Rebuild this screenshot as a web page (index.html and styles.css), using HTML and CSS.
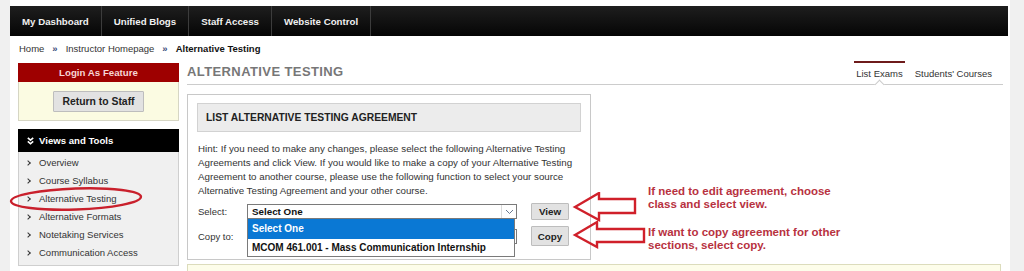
FILE: index.html
```html
<!DOCTYPE html>
<html lang="en">
<head>
    <meta charset="UTF-8">
    <title>Alternative Testing</title>
    <link rel="stylesheet" href="styles.css">
</head>
<body>
    <div class="page">
        <nav class="topnav">
            <a class="nav-item" href="#">My Dashboard</a>
            <a class="nav-item" href="#">Unified Blogs</a>
            <a class="nav-item" href="#">Staff Access</a>
            <a class="nav-item" href="#">Website Control</a>
        </nav>

        <div class="crumbs">
            <a href="#">Home</a>
            <span class="sep">&raquo;</span>
            <a href="#">Instructor Homepage</a>
            <span class="sep">&raquo;</span>
            <span class="current">Alternative Testing</span>
        </div>

        <div class="layout">
            <aside class="sidebar">
                <div class="login-box">
                    <div class="login-head">Login As Feature</div>
                    <div class="login-body">
                        <button class="btn btn-staff">Return to Staff</button>
                    </div>
                </div>

                <div class="tools">
                    <div class="tools-head">
                        <svg class="tools-icon" width="7" height="8" viewBox="0 0 7 8">
                            <path d="M0.8 0.8 L3.5 3.2 L6.2 0.8 M0.8 4.4 L3.5 6.8 L6.2 4.4" fill="none" stroke="#fff" stroke-width="1.6"/>
                        </svg>
                        Views and Tools
                    </div>
                    <ul class="tools-list">
                        <li><a href="#">Overview</a></li>
                        <li><a href="#">Course Syllabus</a></li>
                        <li><a href="#">Alternative Testing</a></li>
                        <li><a href="#">Alternative Formats</a></li>
                        <li><a href="#">Notetaking Services</a></li>
                        <li><a href="#">Communication Access</a></li>
                    </ul>
                </div>
            </aside>

            <main class="content">
                <div class="title-row">
                    <h1 class="title">ALTERNATIVE TESTING</h1>
                    <div class="tabs">
                        <a class="tab active" href="#">List Exams</a>
                        <a class="tab" href="#">Students' Courses</a>
                    </div>
                </div>

                <div class="panel">
                    <div class="panel-head">LIST ALTERNATIVE TESTING AGREEMENT</div>
                    <p class="hint">
                        Hint: If you need to make any changes, please select the following Alternative Testing<br>
                        Agreements and click View. If you would like to make a copy of your Alternative Testing<br>
                        Agreement to another course, please use the following function to select your source<br>
                        Alternative Testing Agreement and your other course.
                    </p>

                    <div class="form-row">
                        <label class="form-label">Select:</label>
                        <div class="select-box">
                            <span class="select-value">Select One</span>
                            <span class="select-arrow">
                                <svg width="9" height="6" viewBox="0 0 9 6"><path d="M1 1 L4.5 4.5 L8 1" fill="none" stroke="#6a7a90" stroke-width="1"/></svg>
                            </span>
                            <ul class="select-menu">
                                <li class="selected">Select One</li>
                                <li>MCOM 461.001 - Mass Communication Internship</li>
                            </ul>
                        </div>
                        <button class="btn btn-view">View</button>
                    </div>

                    <div class="form-row row-copy">
                        <label class="form-label">Copy to:</label>
                        <!-- covered by the open menu above -->
                        <div class="select-box"></div>
                        <button class="btn btn-copy">Copy</button>
                    </div>
                </div>

                <div class="notice"></div>
            </main>
        </div>

        <!-- annotations drawn on top of the screenshot -->
        <svg class="ring" width="140" height="30" viewBox="0 0 140 30">
            <ellipse cx="69" cy="14" rx="65" ry="10.5" transform="rotate(-2 69 14)" fill="none" stroke="#c9202c" stroke-width="2.4"/>
        </svg>
        <svg class="arrows" width="80" height="60" viewBox="0 0 80 60">
            <polygon points="3,15 27,1 27,7 63,7 63,21 27,21 27,28" fill="none" stroke="#d0202a" stroke-width="2.4" stroke-linejoin="miter"/>
            <polygon points="3,43 25,30 25,37 72,37 72,50 25,50 25,55" fill="none" stroke="#d0202a" stroke-width="2.4" stroke-linejoin="miter"/>
        </svg>
        <p class="note note-view">If need to edit agreement, choose<br>class and select view.</p>
        <p class="note note-copy">If want to copy agreement for other<br>sections, select copy.</p>
    </div>
</body>
</html>
```

FILE: styles.css
```css
:root {
    --page-bg: #f0f0f0;
    --nav-bg: #111111;
    --text: #333333;
    --border: #c8c8c8;
    --login-red: #9e0000;
    --note-red: #b8323f;
}

* {
    box-sizing: border-box;
}

body {
    margin: 0;
    background-color: var(--page-bg);
    font-family: "Liberation Sans", Arial, sans-serif;
    font-size: 9.5px;
    color: var(--text);
    overflow: hidden;
}

a {
    color: inherit;
    text-decoration: none;
}

.page {
    position: relative;
    width: 1000px;
    min-height: 271px;
    margin-left: 10px;
    padding-top: 6px;
    background-color: #ffffff;
}

/* top navigation */
.topnav {
    display: flex;
    width: 998px;
    height: 30px;
    background: linear-gradient(#1e1e1e, #050505);
}

.nav-item {
    display: flex;
    align-items: center;
    padding: 0 12px;
    border-right: 1px solid #3c3c3c;
    color: #f0f0f0;
    font-weight: bold;
    font-size: 9.7px;
}

.crumbs {
    display: flex;
    align-items: center;
    gap: 8px;
    height: 24px;
    padding-left: 9px;
    color: #333;
}

.crumbs .sep {
    color: #3a4a7a;
    font-weight: bold;
}

.crumbs .current {
    font-weight: bold;
    color: #111;
}

.layout {
    display: flex;
    gap: 8px;
    padding: 1px 0 0 8px;
}

/* sidebar */
.sidebar {
    width: 161px;
    margin-top: 2px;
}

.login-head {
    height: 19px;
    line-height: 19px;
    background-color: var(--login-red);
    color: #f6d6d6;
    font-weight: bold;
    font-size: 9.7px;
    text-align: center;
}

.login-body {
    height: 39px;
    padding-top: 9px;
    background-color: #fbfbe2;
    border: 1px solid #d6d6c4;
    border-top: none;
    text-align: center;
}

.btn {
    font-family: inherit;
    font-weight: bold;
    color: #222;
    background-color: #e2e2e2;
    border: 1px solid #bdbdbd;
    border-radius: 1px;
    padding: 0;
    cursor: pointer;
}

.btn-staff {
    width: 91px;
    height: 21px;
    font-size: 10.4px;
}

.tools {
    margin-top: 8px;
}

.tools-head {
    display: flex;
    align-items: center;
    gap: 5px;
    height: 23px;
    padding-left: 9px;
    background-color: #000;
    color: #fff;
    font-weight: bold;
    font-size: 9.6px;
}

.tools-list {
    list-style: none;
    margin: 0;
    padding: 2px 0 3px 0;
    background-color: #f0f0f0;
    border: 1px solid #cfcfcf;
    border-top: none;
}

.tools-list li {
    height: 18px;
    line-height: 18px;
    padding-left: 20px;
    position: relative;
}

.tools-list li::before {
    content: "";
    position: absolute;
    left: 7px;
    top: 7px;
    width: 3px;
    height: 3px;
    border-top: 1.5px solid #333;
    border-right: 1.5px solid #333;
    transform: rotate(45deg);
}

/* main content */
.content {
    width: 816px;
}

.title-row {
    display: flex;
    justify-content: space-between;
    height: 24px;
    border-bottom: 1px solid #cccccc;
}

.title {
    margin: 0;
    padding-top: 4px;
    font-size: 13px;
    line-height: 14px;
    letter-spacing: 0.4px;
    color: #777777;
}

.tabs {
    display: flex;
    gap: 8px;
    padding-right: 9px;
}

.tab {
    position: relative;
    padding: 4px 2px 0;
    border-top: 2px solid transparent;
    line-height: 14px;
    color: #333;
}

.tab.active {
    border-top-color: #6e1b1b;
}

.tab.active::after {
    content: "";
    position: absolute;
    left: 50%;
    bottom: -4px;
    width: 6px;
    height: 6px;
    margin-left: -3px;
    background-color: #fff;
    border-top: 1px solid #cccccc;
    border-left: 1px solid #cccccc;
    transform: rotate(45deg);
}

.panel {
    width: 404px;
    margin-top: 9px;
    padding: 8px 9px 13px;
    border: 1px solid var(--border);
}

.panel-head {
    height: 29px;
    line-height: 27px;
    padding-left: 8px;
    background-color: #ececec;
    border: 1px solid #d2d2d2;
    font-weight: bold;
    font-size: 10.3px;
    color: #222;
}

.hint {
    margin: 10px 0 0 1px;
    font-size: 9.75px;
    line-height: 14px;
    white-space: nowrap;
}

.form-row {
    display: grid;
    grid-template-columns: 49px 270px auto;
    align-items: center;
    margin: 5px 0 0 1px;
}

.row-copy {
    margin-top: 6px;
}

.select-box {
    position: relative;
    display: flex;
    align-items: center;
    height: 15px;
    border: 1px solid #7a7a7a;
    background-color: #fff;
    font-weight: bold;
    font-size: 9.8px;
    color: #111;
}

.select-value {
    flex: 1;
    padding-left: 4px;
}

.select-arrow {
    display: flex;
    align-items: center;
    justify-content: center;
    width: 15px;
    height: 100%;
    border-left: 1px solid #dadada;
}

.select-menu {
    position: absolute;
    top: 13px;
    left: -1px;
    z-index: 2;
    width: 268px;
    margin: 0;
    padding: 0;
    list-style: none;
    background-color: #fff;
    border: 1px solid #7a7a7a;
}

.select-menu li {
    height: 17px;
    line-height: 17px;
    padding-left: 4px;
    font-size: 10px;
}

.select-menu li.selected {
    height: 20px;
    line-height: 20px;
    background-color: #0a78d4;
    color: #fff;
}

.btn-view,
.btn-copy {
    width: 38px;
    margin-left: 14px;
    font-size: 9.8px;
}

.btn-view {
    height: 17px;
}

.btn-copy {
    height: 20px;
}

.notice {
    width: 814px;
    height: 20px;
    margin-top: 4px;
    background-color: #fdfdea;
    border: 1px solid #dcdcbc;
}

/* annotations */
.ring {
    position: absolute;
    left: -3px;
    top: 185px;
}

.arrows {
    position: absolute;
    left: 562px;
    top: 192px;
}

.note {
    position: absolute;
    left: 638px;
    margin: 0;
    font-weight: bold;
    font-size: 11.5px;
    line-height: 13px;
    color: var(--note-red);
}

.note-view {
    top: 185px;
}

.note-copy {
    top: 226px;
}
```
